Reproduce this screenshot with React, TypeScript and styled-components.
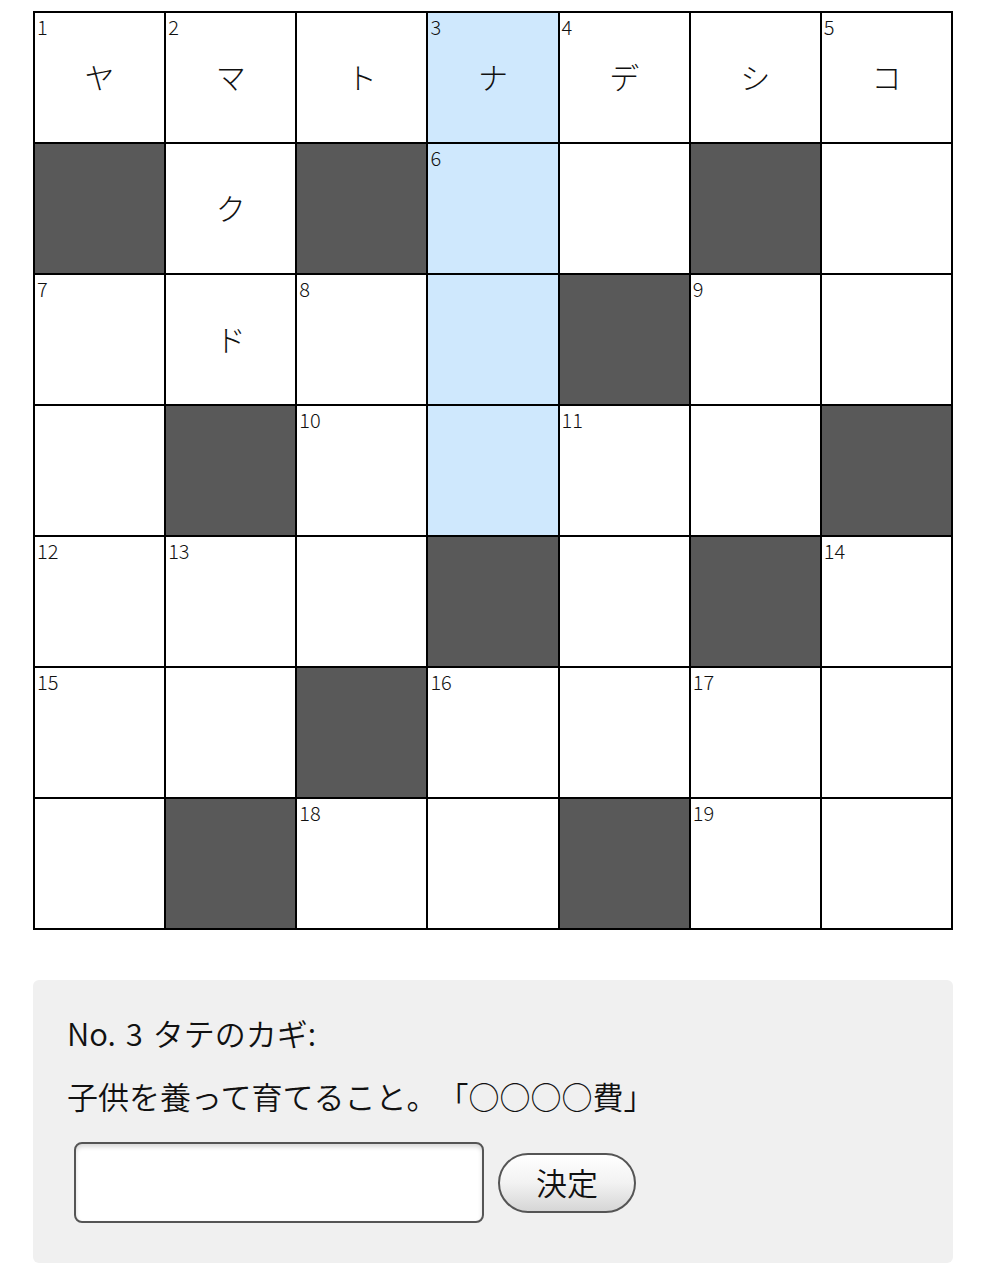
import styled, { createGlobalStyle } from 'styled-components';

const GlobalStyle = createGlobalStyle`
  body {
    margin: 0;
    background: #ffffff;
    font-family: "Noto Sans CJK JP", "Noto Sans", sans-serif;
    color: #222;
    text-spacing-trim: space-all;
  }
`;

const Page = styled.div`
  width: 920px;
  padding: 11px 0 16px 33px;
`;

const Board = styled.div`
  display: grid;
  grid-template-columns: repeat(7, 1fr);
  grid-auto-rows: 129px;
  gap: 2px;
  background: #000;
  border: 2px solid #000;
  width: 920px;
  box-sizing: border-box;
`;

const Cell = styled.div<{ $kind: 'white' | 'black' | 'active' }>`
  position: relative;
  display: flex;
  align-items: center;
  justify-content: center;
  padding-bottom: 4px;
  box-sizing: border-box;
  background: ${({ $kind }) =>
    $kind === 'black' ? '#595959' : $kind === 'active' ? '#cfe8fd' : '#ffffff'};
  font-size: 30px;
  font-weight: 300;
  color: #111;
`;

const Num = styled.span`
  position: absolute;
  top: 4px;
  left: 2px;
  font-size: 20px;
  font-weight: 300;
  line-height: 1;
  color: #111;
`;

const Panel = styled.div`
  margin-top: 50px;
  background: #f0f0f0;
  border-radius: 6px;
  padding: 31px 34px 40px;
  color: #111;
`;

const ClueTitle = styled.p`
  margin: 0;
  font-size: 31px;
  font-weight: 350;
  line-height: 44px;
  word-spacing: 3px;
`;

const ClueText = styled.p`
  margin: 19px 0 0;
  font-size: 31px;
  font-weight: 350;
  line-height: 44px;
  text-spacing-trim: space-all;
`;

const AnswerRow = styled.div`
  display: flex;
  align-items: center;
  margin: 24px 0 0 7px;
  gap: 14px;
`;

const AnswerInput = styled.input`
  width: 410px;
  height: 81px;
  box-sizing: border-box;
  border: 2px solid #555;
  border-radius: 8px;
  background: #fff;
  box-shadow: inset 0 3px 4px rgba(0, 0, 0, 0.15);
  font-size: 30px;
  padding: 0 12px;
  outline: none;
`;

const SubmitButton = styled.button`
  width: 138px;
  height: 60px;
  border: 2px solid #555;
  border-radius: 30px;
  background: linear-gradient(#ffffff 0%, #f2f2f2 50%, #d6d6d6 100%);
  font-family: "Noto Sans CJK JP", sans-serif;
  font-size: 31px;
  font-weight: 350;
  line-height: 1;
  color: #111;
  padding: 0 0 3px;
  cursor: pointer;
`;

type CellData = { k: 'white' | 'black' | 'active'; n?: number; c?: string };

const W = (n?: number, c?: string): CellData => ({ k: 'white', n, c });
const A = (n?: number, c?: string): CellData => ({ k: 'active', n, c });
const B: CellData = { k: 'black' };

const board: CellData[][] = [
  [W(1, 'ヤ'), W(2, 'マ'), W(undefined, 'ト'), A(3, 'ナ'), W(4, 'デ'), W(undefined, 'シ'), W(5, 'コ')],
  [B, W(undefined, 'ク'), B, A(6), W(), B, W()],
  [W(7), W(undefined, 'ド'), W(8), A(), B, W(9), W()],
  [W(), B, W(10), A(), W(11), W(), B],
  [W(12), W(13), W(), B, W(), B, W(14)],
  [W(15), W(), B, W(16), W(), W(17), W()],
  [W(), B, W(18), W(), B, W(19), W()],
];

export default function App() {
  return (
    <Page>
      <GlobalStyle />
      <Board>
        {board.flat().map((cell, i) => (
          <Cell key={i} $kind={cell.k}>
            {cell.n && <Num>{cell.n}</Num>}
            {cell.c}
          </Cell>
        ))}
      </Board>
      <Panel>
        <ClueTitle>No. 3 タテのカギ:</ClueTitle>
        <ClueText>子供を養って育てること。「○○○○費」</ClueText>
        <AnswerRow>
          <AnswerInput type="text" />
          <SubmitButton>決定</SubmitButton>
        </AnswerRow>
      </Panel>
    </Page>
  );
}
